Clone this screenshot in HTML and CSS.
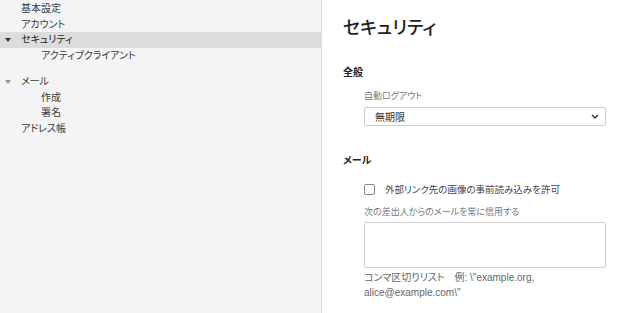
FILE: index.html
```html
<!DOCTYPE html>
<html lang="ja">
<head>
  <meta charset="UTF-8" />
  <title>設定</title>
  <link rel="stylesheet" href="styles.css">
</head>
<body>
  <nav class="sidebar">
    <div class="nav-item">基本設定</div>
    <div class="nav-item">アカウント</div>
    <div class="nav-item active"><span class="caret"></span>セキュリティ</div>
    <div class="nav-item child">アクティブクライアント</div>

    <div class="nav-group">
      <div class="nav-item"><span class="caret light"></span>メール</div>
      <div class="nav-item child">作成</div>
      <div class="nav-item child">署名</div>
      <div class="nav-item">アドレス帳</div>
    </div>
  </nav>

  <main class="content">
    <h1>セキュリティ</h1>

    <h2 class="section-title">全般</h2>
    <div class="field">
      <label class="field-label">自動ログアウト</label>
      <div class="select-wrap">
        <select class="select">
          <option>無期限</option>
        </select>
        <svg class="chevron" width="8" height="5" viewBox="0 0 8 5">
          <path d="M1 1 L4 4 L7 1" fill="none" stroke="#333" stroke-width="1.4" />
        </svg>
      </div>
    </div>

    <h2 class="section-title mail">メール</h2>
    <div class="field">
      <label class="check-row">
        <input type="checkbox" class="checkbox">
        <span>外部リンク先の画像の事前読み込みを許可</span>
      </label>
      <label class="field-label trust">次の差出人からのメールを常に信用する</label>
      <textarea class="textarea"></textarea>
      <div class="hint">コンマ区切りリスト　例: \"example.org,<br>alice@example.com\"</div>
    </div>
  </main>
</body>
</html>
```

FILE: styles.css
```css
body {
  margin: 0;
  display: flex;
  height: 100vh;
  overflow: hidden;
  font-family: "Open Sans", "Noto Sans CJK JP", sans-serif;
  font-size: 10px;
  font-feature-settings: "palt";
  color: #3a3a3a;
  background: #fff;
}

.sidebar {
  width: 322px;
  flex-shrink: 0;
  background: #f4f4f4;
  border-right: 1px solid #dedede;
  padding-top: 1px;
  box-sizing: border-box;
}

.nav-item {
  position: relative;
  height: 15.5px;
  line-height: 15.5px;
  padding-left: 21px;
  white-space: nowrap;
}

.nav-item.child {
  padding-left: 41px;
}

.nav-item.active {
  background: #dcdcdc;
  color: #222;
}

.nav-group {
  margin-top: 11px;
}

.caret {
  position: absolute;
  left: 5px;
  top: 6px;
  width: 0;
  height: 0;
  border-left: 3px solid transparent;
  border-right: 3px solid transparent;
  border-top: 4px solid #333;
}

.caret.light {
  border-top-color: #999;
}

.content {
  flex: 1;
  padding: 15px 0 0 21px;
}

h1 {
  margin: 0;
  font-size: 18px;
  font-weight: 500;
  line-height: 24px;
  color: #222;
}

.section-title {
  margin: 25px 0 0 0;
  font-size: 10px;
  font-weight: bold;
  line-height: 16px;
  color: #222;
}

.section-title.mail {
  margin-top: 26px;
}

.field {
  padding-left: 21px;
  width: 242px;
}

.field-label {
  display: block;
  margin-top: 8px;
  font-size: 9px;
  line-height: 16px;
  color: #777;
}

.field-label.trust {
  margin-top: 7px;
}

.select-wrap {
  position: relative;
  margin-top: 3px;
}

.select {
  appearance: none;
  display: block;
  width: 242px;
  height: 19px;
  margin: 0;
  padding: 0 0 0 10px;
  border: 1px solid #ccc;
  border-radius: 2px;
  background: #fff;
  font-family: inherit;
  font-size: 10px;
  font-feature-settings: "palt";
  color: #333;
}

.chevron {
  position: absolute;
  right: 7px;
  top: 7px;
}

.check-row {
  display: flex;
  align-items: center;
  gap: 10px;
  margin-top: 13px;
  height: 16px;
  font-size: 9.5px;
  color: #444;
}

.checkbox {
  appearance: none;
  width: 11px;
  height: 11px;
  margin: 0;
  border: 1px solid #888;
  border-radius: 2px;
  background: #fff;
}

.textarea {
  display: block;
  width: 242px;
  height: 46px;
  margin-top: 2px;
  box-sizing: border-box;
  border: 1px solid #ccc;
  border-radius: 2px;
  resize: none;
}

.hint {
  margin-top: 2px;
  font-family: "Liberation Sans", "Noto Sans CJK JP", sans-serif;
  font-size: 10px;
  line-height: 15px;
  color: #666;
  width: 280px;
}
```
